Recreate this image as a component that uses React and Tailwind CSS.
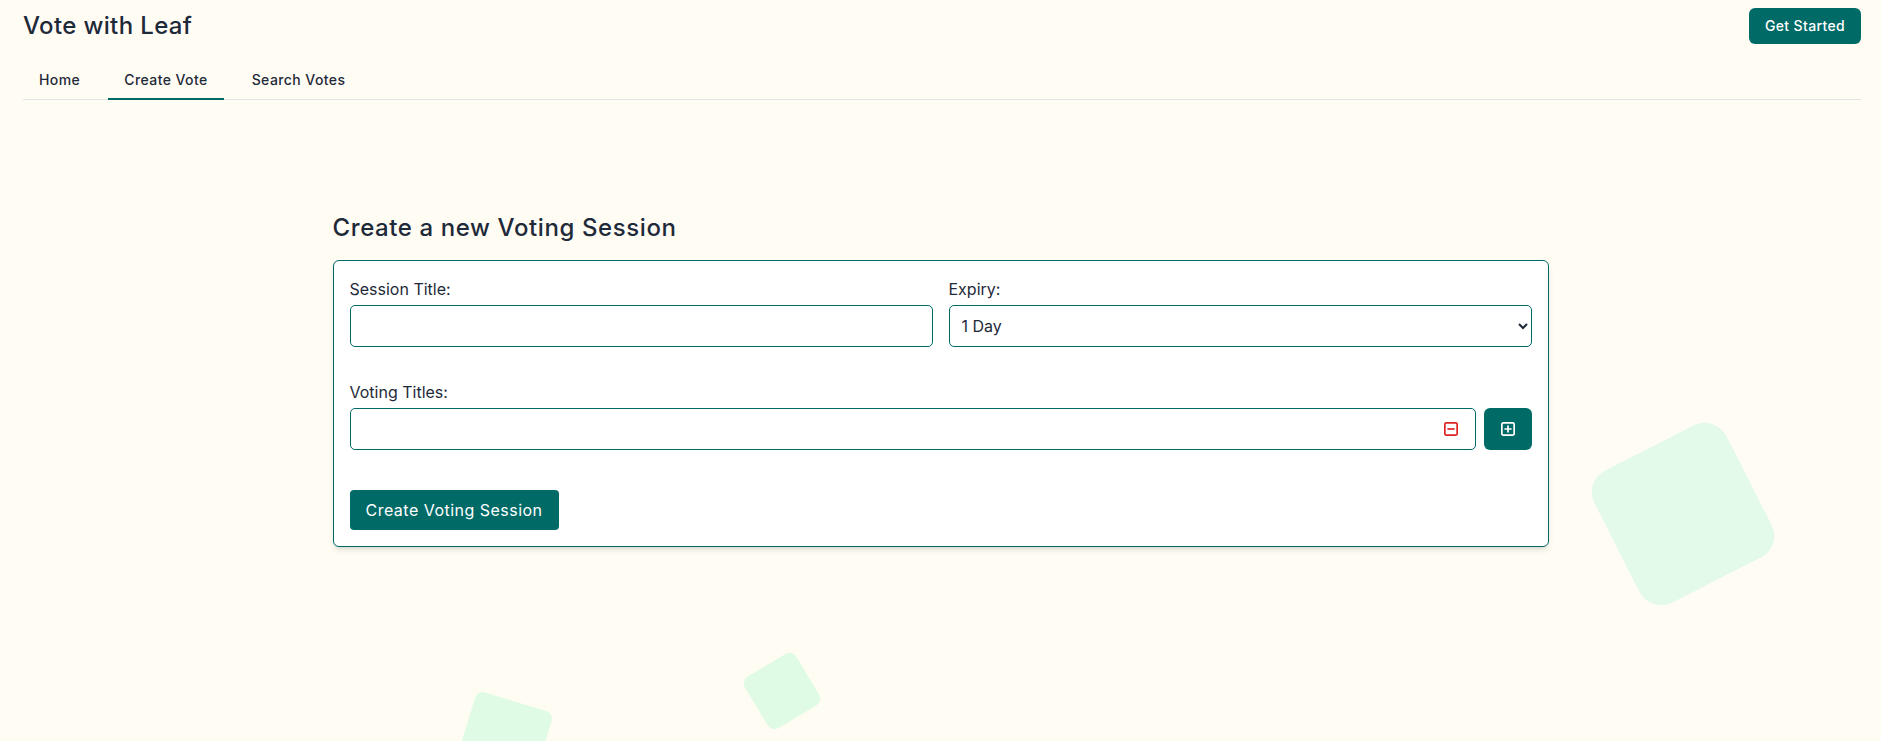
import React from "react";

function SquareMinus({ className }) {
  return (
    <svg width="14" height="14" viewBox="0 0 14 14" fill="none" stroke="currentColor" strokeWidth="1.7" className={className}>
      <rect x="0.85" y="0.85" width="12.3" height="12.3" rx="1.3" />
      <path d="M3.4 7h7.2" />
    </svg>
  );
}

function SquarePlus({ className }) {
  return (
    <svg width="14" height="14" viewBox="0 0 14 14" fill="none" stroke="currentColor" strokeWidth="1.7" className={className}>
      <rect x="0.85" y="0.85" width="12.3" height="12.3" rx="1.3" />
      <path d="M3.4 7h7.2M7 3.4v7.2" />
    </svg>
  );
}

export default function App() {
  return (
    <div className="relative h-screen w-full overflow-hidden bg-[#fffcf4] font-['Inter',sans-serif] text-[#1e2939]">
      {/* decorative squares */}
      <div className="absolute left-[1609px] top-[440px] h-[148px] w-[148px] rotate-[-27deg] rounded-[24px] bg-[#e2fae7]" />
      <div className="absolute left-[752px] top-[661px] h-[60px] w-[60px] rotate-[-31deg] rounded-[8px] bg-[#dffbe5]" />
      <div className="absolute left-[464px] top-[700px] h-[80px] w-[80px] rotate-[17deg] rounded-[8px] bg-[#dffbe5]" />

      <div className="relative z-10">
        <header className="pl-[23px] pr-[20px] pt-2">
          <div className="flex items-center justify-between">
            <h1 className="text-2xl font-medium leading-8 tracking-[0.015em] text-[#1e2939]">Vote with Leaf</h1>
            <button className="rounded-md bg-[#006a67] px-4 py-2 text-sm font-medium leading-5 tracking-[0.025em] text-white">
              Get Started
            </button>
          </div>
          <nav className="mt-[18px] flex gap-3 border-b border-[#e3e6e8]">
            <a className="-mb-px border-b-2 border-transparent px-4 py-2 text-sm font-medium leading-5 tracking-[0.03em] text-[#1e2939]">Home</a>
            <a className="-mb-px border-b-2 border-[#006a67] px-4 py-2 text-sm font-medium leading-5 tracking-[0.03em] text-[#1e2939]">Create Vote</a>
            <a className="-mb-px border-b-2 border-transparent px-4 py-2 text-sm font-medium leading-5 tracking-[0.03em] text-[#1e2939]">Search Votes</a>
          </nav>
        </header>

        <main className="mx-auto mt-28 max-w-7xl px-8">
          <h2 className="mb-4 text-2xl font-medium leading-8 tracking-[0.025em] text-[#1e2939]">Create a new Voting Session</h2>
          <div className="rounded-md border border-[#006a67] bg-white p-4 shadow-md">
            <div className="grid grid-cols-2 gap-4">
              <div>
                <label className="mb-1 block text-base leading-6">Session Title:</label>
                <input type="text" className="block h-[42px] w-full rounded-[5px] border border-[#006a67] bg-white px-3 text-base outline-none" />
              </div>
              <div>
                <label className="mb-1 block text-base leading-6">Expiry:</label>
                <select className="block h-[42px] w-full rounded-[5px] border border-[#006a67] bg-white px-2 text-base text-[#1e2939] outline-none">
                  <option>1 Day</option>
                  <option>1 Week</option>
                  <option>1 Month</option>
                </select>
              </div>
            </div>

            <div className="mt-[33px]">
              <label className="mb-1 block text-base leading-6">Voting Titles:</label>
              <div className="flex gap-2">
                <div className="relative flex-1">
                  <input type="text" className="block h-[42px] w-full rounded-[5px] border border-[#006a67] bg-white px-3 pr-10 text-base outline-none" />
                  <SquareMinus className="absolute right-[18px] top-[14px] text-[#dc2626]" />
                </div>
                <button className="flex h-[42px] w-12 items-center justify-center rounded-md bg-[#006a67] text-white">
                  <SquarePlus />
                </button>
              </div>
            </div>

            <button className="mt-10 rounded bg-[#006a67] px-4 py-2 text-base leading-6 tracking-[0.03em] text-white">
              Create Voting Session
            </button>
          </div>
        </main>
      </div>
    </div>
  );
}
